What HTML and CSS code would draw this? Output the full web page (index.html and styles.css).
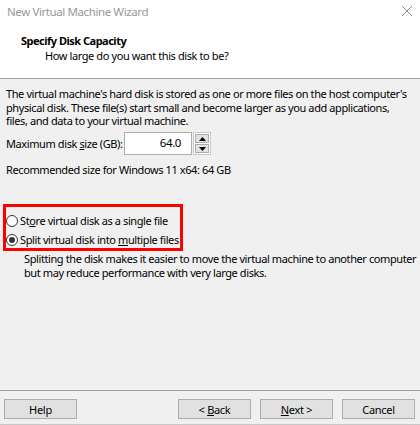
FILE: index.html
```html
<!DOCTYPE html>
<html>
<head>
<meta charset="utf-8">
<link rel="stylesheet" href="styles.css">
</head>
<body>
<div class="window">
  <div class="top">
    <div class="titlebar">
      <span class="title">New Virtual Machine Wizard</span>
      <svg class="close" width="12" height="12" viewBox="0 0 12 12"><path d="M1 1L11 11M11 1L1 11" stroke="#8a8a8a" stroke-width="1"/></svg>
    </div>
    <div class="head">
      <div class="h1">Specify Disk Capacity</div>
      <div class="h2">How large do you want this disk to be?</div>
    </div>
  </div>
  <div class="content">
    <p class="intro">The virtual machine's hard disk is stored as one or more files on the host computer's<br>physical disk. These file(s) start small and become larger as you add applications,<br>files, and data to your virtual machine.</p>
    <div class="sizerow">
      <span class="label">Maximum disk <u>s</u>ize (GB):</span>
      <div class="spin">
        <div class="field">64.0</div>
        <div class="arrows">
          <div class="arr"><svg width="7" height="4" viewBox="0 0 7 4"><path d="M3.5 0L7 4H0Z" fill="#000"/></svg></div>
          <div class="arr"><svg width="7" height="4" viewBox="0 0 7 4"><path d="M0 0H7L3.5 4Z" fill="#000"/></svg></div>
        </div>
      </div>
    </div>
    <div class="rec">Recommended size for Windows 11 x64: 64 GB</div>
    <div class="choices">
      <div class="radio"><span class="dot"></span><span class="rtext">St<u>o</u>re virtual disk as a single file</span></div>
      <div class="radio"><span class="dot on"></span><span class="rtext">Split virtual disk into <u>m</u>ultiple files</span></div>
    </div>
    <p class="desc">Splitting the disk makes it easier to move the virtual machine to another computer<br>but may reduce performance with very large disks.</p>
  </div>
  <div class="footer">
    <button class="btn">Help</button>
    <div class="spacer"></div>
    <button class="btn">&lt; <u>B</u>ack</button>
    <button class="btn"><u>N</u>ext &gt;</button>
    <button class="btn">Cancel</button>
  </div>
</div>
</body>
</html>
```
FILE: styles.css
```css
html, body { margin: 0; padding: 0; }
body {
  width: 420px;
  height: 425px;
  overflow: hidden;
  font-family: "Noto Sans", "Open Sans", sans-serif;
  font-size: 11px;
  letter-spacing: -0.4px;
  color: #000;
  background: #f0f0f0;
}
.window {
  width: 420px;
  height: 425px;
  display: flex;
  flex-direction: column;
  box-sizing: border-box;
  border-bottom: 1px solid #c8c8c8;
}
.top {
  background: #fff;
  height: 78px;
  border-bottom: 1px solid #a0a0a0;
  flex: none;
}
.titlebar {
  height: 24px;
  display: flex;
  align-items: center;
  justify-content: space-between;
  padding: 0 7px;
}
.title { color: #999; font-size: 11.5px; line-height: 16px; }
.close { margin-top: -2px; }
.head { padding: 9px 0 0 21px; }
.h1 { font-weight: bold; line-height: 15px; letter-spacing: -0.5px; }
.h2 { padding-left: 24px; line-height: 15px; }
.content {
  flex: 1;
  padding: 8px 6px 0 6px;
  white-space: nowrap;
}
.intro { margin: 0; line-height: 13.7px; }
.sizerow {
  display: flex;
  align-items: center;
  margin-top: 4px;
  height: 23px;
}
.label { width: 118px; flex: none; }
.spin { display: flex; height: 23px; }
.field {
  width: 56px;
  height: 21px;
  background: #fff;
  border: 1px solid #adadad;
  text-align: right;
  padding-right: 10px;
  line-height: 20px;
  font-size: 11.5px;
}
.arrows {
  display: flex;
  flex-direction: column;
  gap: 1px;
  margin-left: 1px;
  padding: 1px;
  border: 1px solid #c9c9c9;
  background: #fff;
  height: 19px;
}
.arr {
  width: 12px;
  height: 8px;
  background: #e1e1e1;
  border: 1px solid #adadad;
  display: flex;
  align-items: center;
  justify-content: center;
}
.rec { margin-top: 8px; line-height: 14px; }
.choices {
  margin-top: 27px;
  margin-left: -3px;
  width: 174px;
  border: 3px solid #f00;
  padding: 6px 0 1px 0;
  display: flex;
  flex-direction: column;
  gap: 4px;
}
.radio {
  display: flex;
  align-items: center;
  line-height: 15px;
}
.dot {
  width: 12px;
  height: 12px;
  border: 1px solid #333;
  border-radius: 50%;
  background: #fff;
  margin-right: 2px;
  display: flex;
  align-items: center;
  justify-content: center;
  flex: none;
  box-sizing: border-box;
}
.dot.on::after {
  content: "";
  width: 6px;
  height: 6px;
  border-radius: 50%;
  background: #333;
}
.desc { margin: 1px 0 0 18px; line-height: 14px; }
.footer {
  flex: none;
  height: 34px;
  border-top: 1px solid #a0a0a0;
  display: flex;
  align-items: flex-start;
  padding: 8px 5px 0 4px;
  box-sizing: border-box;
  gap: 9px;
}
.spacer { flex: 1; }
.btn {
  width: 73px;
  height: 20px;
  background: #e1e1e1;
  border: 1px solid #adadad;
  font-family: inherit;
  font-size: 11px;
  letter-spacing: -0.3px;
  color: #000;
  padding: 0;
  margin: 0;
}
```
